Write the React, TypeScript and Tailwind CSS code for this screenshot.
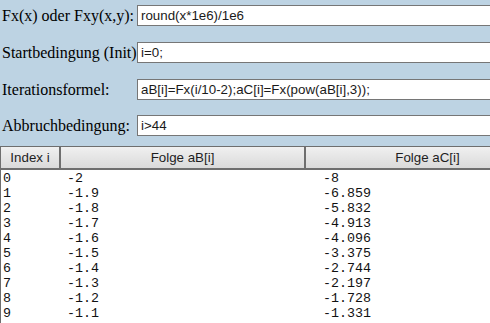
const fields = [
    { label: 'Fx(x) oder Fxy(x,y):', value: 'round(x*1e6)/1e6', mt: 'mt-[5px]' },
    { label: 'Startbedingung (Init)', value: 'i=0;', mt: 'mt-4' },
    { label: 'Iterationsformel:', value: 'aB[i]=Fx(i/10-2);aC[i]=Fx(pow(aB[i],3));', mt: 'mt-4' },
    { label: 'Abbruchbedingung:', value: 'i>44', mt: 'mt-[15px]' },
]

const rows = [
    ['0', '-2', '-8'],
    ['1', '-1.9', '-6.859'],
    ['2', '-1.8', '-5.832'],
    ['3', '-1.7', '-4.913'],
    ['4', '-1.6', '-4.096'],
    ['5', '-1.5', '-3.375'],
    ['6', '-1.4', '-2.744'],
    ['7', '-1.3', '-2.197'],
    ['8', '-1.2', '-1.728'],
    ['9', '-1.1', '-1.331'],
]

const headers = [
    { name: 'Index i', w: 'w-[60px]' },
    { name: 'Folge aB[i]', w: 'w-[245px]' },
    { name: 'Folge aC[i]', w: 'w-[245px]' },
]

export default function App() {
    return (
        <div className="w-[490px] h-[323px] overflow-hidden bg-[#bdd3e3] flex flex-col">
            {fields.map((f) => (
                <div key={f.label} className={`${f.mt} flex items-center h-[21px] shrink-0`}>
                    <div className="w-[137px] shrink-0 pl-[2px] whitespace-nowrap text-[16px] text-black font-['Liberation_Serif',serif]">
                        {f.label}
                    </div>
                    <div className="w-[380px] shrink-0 h-[21px] bg-white border border-[#767676] pl-[3px] flex items-center whitespace-nowrap text-[13.333px] text-[#1a1a1a] font-['Liberation_Sans',Arial,sans-serif]">
                        {f.value}
                    </div>
                </div>
            ))}
            <div className="mt-[10px] flex shrink-0 w-[550px] h-[23px]">
                {headers.map((h) => (
                    <div
                        key={h.name}
                        className={`${h.w} shrink-0 flex items-center justify-center border border-[#6e6e6e] bg-gradient-to-b from-[#f0f0f0] to-[#dadada] text-[13.333px] text-[#1e1e1e] font-['Liberation_Sans',Arial,sans-serif]`}
                    >
                        {h.name}
                    </div>
                ))}
            </div>
            <div className="flex-1 w-[550px] bg-white border-t border-l border-[#6e6e6e] pt-[1px] pl-[2px] text-[13.333px] leading-[15px] text-[#111] font-['Liberation_Mono','Courier_New',monospace] whitespace-pre">
                {rows.map((r) => (
                    <div key={r[0]} className="flex h-[15px]">
                        <div className="w-[64px] shrink-0">{r[0]}</div>
                        <div className="w-[256px] shrink-0">{r[1]}</div>
                        <div>{r[2]}</div>
                    </div>
                ))}
            </div>
        </div>
    )
}
